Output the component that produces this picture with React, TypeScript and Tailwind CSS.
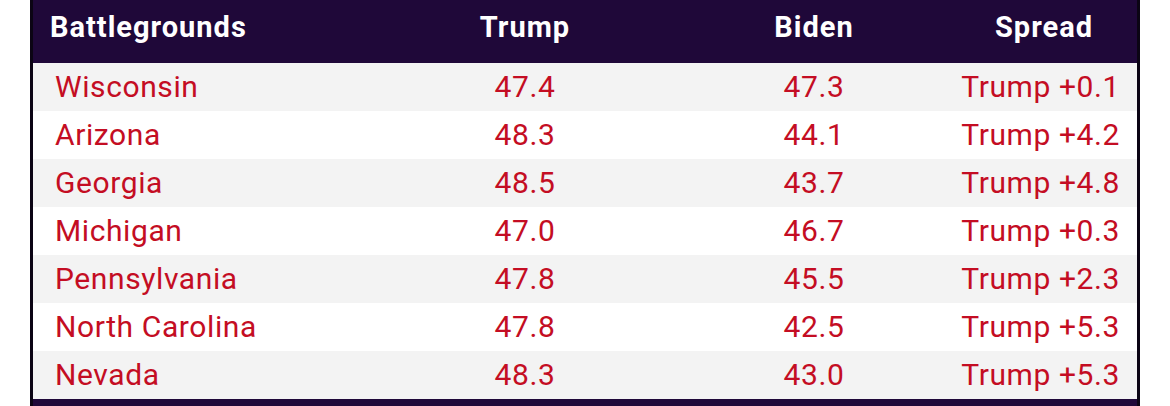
const rows = [
  { state: "Wisconsin", trump: "47.4", biden: "47.3", spread: "Trump +0.1" },
  { state: "Arizona", trump: "48.3", biden: "44.1", spread: "Trump +4.2" },
  { state: "Georgia", trump: "48.5", biden: "43.7", spread: "Trump +4.8" },
  { state: "Michigan", trump: "47.0", biden: "46.7", spread: "Trump +0.3" },
  { state: "Pennsylvania", trump: "47.8", biden: "45.5", spread: "Trump +2.3" },
  { state: "North Carolina", trump: "47.8", biden: "42.5", spread: "Trump +5.3" },
  { state: "Nevada", trump: "48.3", biden: "43.0", spread: "Trump +5.3" },
];

export default function App() {
  return (
    <div className="w-[1170px] h-[406px] bg-white overflow-hidden font-['Roboto',sans-serif]">
      <div className="ml-[30px] w-[1110px] border-x-[3px] border-x-[#0b0414] bg-[#1f0839] pb-[7px]">
        {/* header */}
        <div className="flex h-[63px] pt-[10px] text-[29px] font-bold tracking-[1px] text-white leading-[34px]">
          <div className="w-[342px] pl-[17px]">Battlegrounds</div>
          <div className="w-[300px] text-center">Trump</div>
          <div className="w-[278px] text-center">Biden</div>
          <div className="w-[184px] pr-[2px] text-center">Spread</div>
        </div>

        {/* rows */}
        {rows.map((row, i) => (
          <div
            key={row.state}
            className={`flex h-[48px] items-center text-[30px] tracking-[0.6px] text-[#c40d23] leading-[48px] ${
              i % 2 === 0 ? "bg-[#f3f3f3]" : "bg-white"
            }`}
          >
            <div className="w-[342px] pl-[22px]">{row.state}</div>
            <div className="w-[300px] text-center">{row.trump}</div>
            <div className="w-[278px] text-center">{row.biden}</div>
            <div className="w-[184px] pr-[17px] text-right whitespace-nowrap">{row.spread}</div>
          </div>
        ))}
      </div>
    </div>
  );
}
